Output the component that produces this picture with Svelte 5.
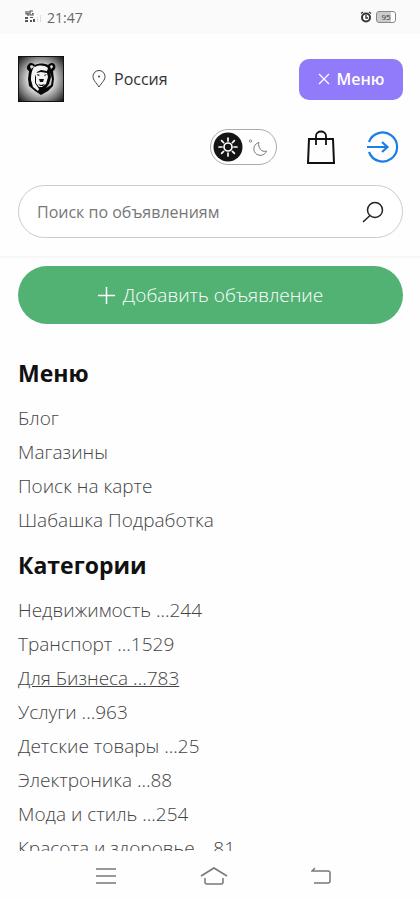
<script>
  let dark = false;
  let query = '';

  const pages = ['Блог', 'Магазины', 'Поиск на карте', 'Шабашка Подработка'];

  const categories = [
    { name: 'Недвижимость', count: 244 },
    { name: 'Транспорт', count: 1529 },
    { name: 'Для Бизнеса', count: 783, active: true },
    { name: 'Услуги', count: 963 },
    { name: 'Детские товары', count: 25 },
    { name: 'Электроника', count: 88 },
    { name: 'Мода и стиль', count: 254 },
    { name: 'Красота и здоровье', count: 81 },
  ];
</script>

<div class="screen">
  <div class="status-bar">
    <svg class="signal" width="19" height="14" viewBox="0 0 19 14" fill="#555" aria-hidden="true">
      <path d="M2 1v3h3M4 1v5M9 1H6v4h3V3.500H8" fill="none" stroke="#555" stroke-width="1.200" />
      <path d="M1 7h3v2H1zM1 10h3v2H1zM6 7h3v1H6zM6 10h2v2H6zM9 9h2v3H9z" />
      <path d="M13 7h1v5h-1zM16 5h1v7h-1z" fill="#ddd" />
    </svg>
    <span class="time">21:47</span>
    <svg class="alarm" width="12" height="12" viewBox="0 0 12 12" aria-hidden="true">
      <circle cx="6" cy="6.500" r="4" fill="#fff" stroke="#333" stroke-width="2" />
      <path d="M1 2.500 3 1M11 2.500 9 1M6 4v3h2" fill="none" stroke="#333" stroke-width="1.300" />
    </svg>
    <div class="battery"><span>95</span></div>
  </div>

  <header>
    <div class="top-row">
      <a class="logo" href="#home" aria-label="Главная">
        <svg width="46" height="46" viewBox="0 0 46 46">
          <defs>
            <radialGradient id="glow" cx="50%" cy="50%" r="70%">
              <stop offset="0.400" stop-color="#ddd" />
              <stop offset="0.650" stop-color="#888" />
              <stop offset="1" stop-color="#080808" />
            </radialGradient>
          </defs>
          <rect width="46" height="46" fill="url(#glow)" />
          <rect x="0.500" y="0.500" width="45" height="45" fill="none" stroke="#111" />
          <path d="M10 9c2-3 5-2 7 0 4-2 9-2 13 0 2-2 5-3 7 0 1 2 0 5-2 6l1 8-1 7-5 5-7 4-6-4-6-5-1-7 1-8c-2-1-3-4-1-6z" fill="#080808" />
          <path d="M12 10c1-1 3-1 4 1l-3 2zM32 10c1-1 3-1 3 1l-2 2z" fill="#ddd" />
          <path d="M17 11c4-2 9-2 13 1l-1 3-6-1-4 2-2 5v6l4 6-1 2-5-4-2-7c0-6 1-11 4-14z" fill="#f4f4f4" />
          <path d="M18 17l5-1 6 1 1 4-2 7-4 3h-3l-3-4z" fill="#f2f2f2" />
          <path d="M19 18l3 1-2 1zM26 19l3-1-2 2zM21 23h5l-1 3h-3zM20 28l3 1 4-1-2 2h-3z" fill="#111" />
          <path d="M32 16l1 5-2 7-3 4 5-3 1-6z" fill="#ccc" />
        </svg>
      </a>
      <a class="region" href="#region">
        <svg width="14" height="18" viewBox="0 0 14 18" fill="none" stroke="#444" aria-hidden="true">
          <path d="M7 17C4 12.500 1 10 1 6.500a6 6 0 0 1 12 0C13 10 10 12.500 7 17z" />
          <circle cx="7" cy="6.500" r="1" fill="#444" stroke="none" />
        </svg>
        Россия
      </a>
      <button class="menu-btn" type="button">
        <svg width="12" height="12" viewBox="0 0 12 12" stroke="#fff" stroke-width="1.300" aria-hidden="true">
          <path d="M1 1l10 10M11 1 1 11" />
        </svg>
        Меню
      </button>
    </div>

    <div class="tools">
      <label class="theme">
        <input type="checkbox" bind:checked={dark} aria-label="Тёмная тема" />
        <svg width="67" height="36" viewBox="0 0 67 36" fill="none" aria-hidden="true">
          <rect x="0.500" y="0.500" width="66" height="35" rx="17.500" fill="#fff" stroke="#aaa" />
          <circle cx="18" cy="18" r="14.500" fill="#151515" />
          <g stroke="#fff" stroke-width="1.700" stroke-linecap="round">
            <circle cx="18" cy="18" r="4" />
            <path d="M18 9v3M18 24v3M9 18h3M24 18h3M11.600 11.600l2 2M22.400 22.400l2 2M24.400 11.600l-2 2M13.600 22.400l-2 2" />
          </g>
          <path d="M49 13.500a6.500 6.500 0 1 0 7.500 8.500c-5 2-9-4-7.500-8.500z" stroke="#777" />
          <circle cx="40.500" cy="12" r="1.200" stroke="#888" />
        </svg>
      </label>
      <a href="#cart" aria-label="Корзина">
        <svg width="30" height="34" viewBox="0 0 30 34" fill="none" stroke="#111" stroke-width="2">
          <path d="M2 9h24l1 24H1z" />
          <path d="M9 15V6c0-6 10-6 10 0v9" stroke-width="1.800" />
        </svg>
      </a>
      <a href="#login" aria-label="Войти">
        <svg width="32" height="32" viewBox="0 0 32 32" fill="none" stroke="#1a7ee8" stroke-width="2.200">
          <path d="M2 11a14.500 14.500 0 1 1 0 10" />
          <path d="M0 16h20M15 11l5.500 5-5.500 5" />
        </svg>
      </a>
    </div>

    <form class="search" on:submit|preventDefault>
      <input type="text" bind:value={query} placeholder="Поиск по объявлениям" aria-label="Поиск по объявлениям" />
      <button type="submit" aria-label="Найти">
        <svg width="22" height="22" viewBox="0 0 22 22" fill="none" stroke="#222" stroke-width="1.500">
          <circle cx="13" cy="9" r="7.500" />
          <path d="M8 14.500 1 21" />
        </svg>
      </button>
    </form>
  </header>

  <main>
    <button class="add" type="button">
      <svg width="17" height="17" viewBox="0 0 17 17" stroke="#fff" stroke-width="1.500" aria-hidden="true">
        <path d="M8.500 0v17M0 8.500h17" />
      </svg>
      Добавить объявление
    </button>

    <h2>Меню</h2>
    <ul>
      {#each pages as page}
        <li><a href="#page">{page}</a></li>
      {/each}
    </ul>

    <h2>Категории</h2>
    <ul>
      {#each categories as category}
        <li><a href="#category" class:active={category.active}>{category.name} ...{category.count}</a></li>
      {/each}
    </ul>
  </main>

  <nav class="system-nav">
    <button type="button" aria-label="Недавние">
      <svg width="20" height="18" viewBox="0 0 20 18" stroke="#777" stroke-width="1.500">
        <path d="M0 2h20M0 9h20M0 16h20" />
      </svg>
    </button>
    <button type="button" aria-label="Домой">
      <svg width="28" height="20" viewBox="0 0 28 20" fill="none" stroke="#777" stroke-width="1.500">
        <path d="M1 10 14 2l13 8M5 12v4q0 2 2 2h14q2 0 2-2v-4" />
      </svg>
    </button>
    <button type="button" aria-label="Назад">
      <svg width="20" height="18" viewBox="0 0 20 18" fill="none" stroke="#777" stroke-width="1.500">
        <path d="M4 1 1 4h16q2 0 2 2v8q0 2-2 2H3" />
      </svg>
    </button>
  </nav>
</div>

<style>
  :global(body) {
    margin: 0;
    background: #fefefe;
  }

  .screen {
    display: flex;
    flex-direction: column;
    height: 100vh;
    font-family: "Open Sans", "Noto Sans", sans-serif;
    color: #333;
  }

  a {
    color: inherit;
    text-decoration: none;
  }

  button {
    padding: 0;
    border: none;
    background: none;
    font-family: inherit;
    cursor: pointer;
  }

  svg {
    display: block;
    flex: none;
  }

  .status-bar {
    display: flex;
    align-items: center;
    gap: 4px;
    height: 34px;
    padding: 0 24px;
    background: #fafafa;
  }

  .time {
    flex: 1;
    font-size: 14px;
    color: #666;
  }

  .battery {
    width: 18px;
    height: 10px;
    border: 1px solid #888;
    border-radius: 3px;
    background: linear-gradient(to right, #ccc 80%, #fff 80%);
    font-size: 8px;
    line-height: 10px;
    text-align: center;
    color: #333;
  }

  header {
    padding: 22px 17px 18px 18px;
    border-bottom: 2px solid #f6f7f8;
  }

  .top-row {
    display: flex;
    align-items: center;
  }

  .region {
    display: flex;
    align-items: center;
    gap: 8px;
    margin-left: 28px;
    font-size: 16px;
  }

  .menu-btn {
    display: flex;
    align-items: center;
    justify-content: center;
    gap: 7px;
    width: 104px;
    height: 41px;
    margin-left: auto;
    border-radius: 10px;
    background: #917bfa;
    color: #fff;
    font-size: 16px;
    font-weight: 600;
  }

  .tools {
    display: flex;
    align-items: center;
    justify-content: flex-end;
    gap: 30px;
    margin: 27px 4px 20px 0;
  }

  .theme {
    position: relative;
    cursor: pointer;
  }

  .theme input {
    position: absolute;
    inset: 0;
    margin: 0;
    opacity: 0;
  }

  .search {
    display: flex;
    align-items: center;
    height: 51px;
    padding: 0 18px;
    border: 1px solid #ccc;
    border-radius: 27px;
    background: #fff;
  }

  .search input {
    flex: 1;
    min-width: 0;
    padding: 0;
    border: none;
    outline: none;
    background: none;
    font-family: inherit;
    font-size: 16px;
    color: #222;
  }

  .search input::placeholder {
    color: #777;
  }

  main {
    flex: 1;
    min-height: 0;
    overflow: hidden;
    padding: 8px 17px 0 18px;
  }

  .add {
    display: flex;
    align-items: center;
    justify-content: center;
    gap: 8px;
    width: 100%;
    height: 58px;
    margin-bottom: 34px;
    border-radius: 29px;
    background: #52b274;
    color: #fff;
    font-size: 19px;
    font-weight: 350;
  }

  h2 {
    margin: 0 0 18px;
    font-size: 23px;
    font-weight: 700;
    line-height: 30px;
    color: #111;
  }

  ul {
    display: flex;
    flex-direction: column;
    gap: 10px;
    margin: 0 0 18px;
    padding: 0;
    list-style: none;
  }

  li {
    font-size: 19px;
    font-weight: 350;
    line-height: 24px;
    color: #444;
  }

  .active {
    text-decoration: underline;
  }

  .system-nav {
    display: flex;
    align-items: center;
    justify-content: space-between;
    height: 49px;
    padding: 0 89px 0 96px;
    background: #fefefe;
  }
</style>
